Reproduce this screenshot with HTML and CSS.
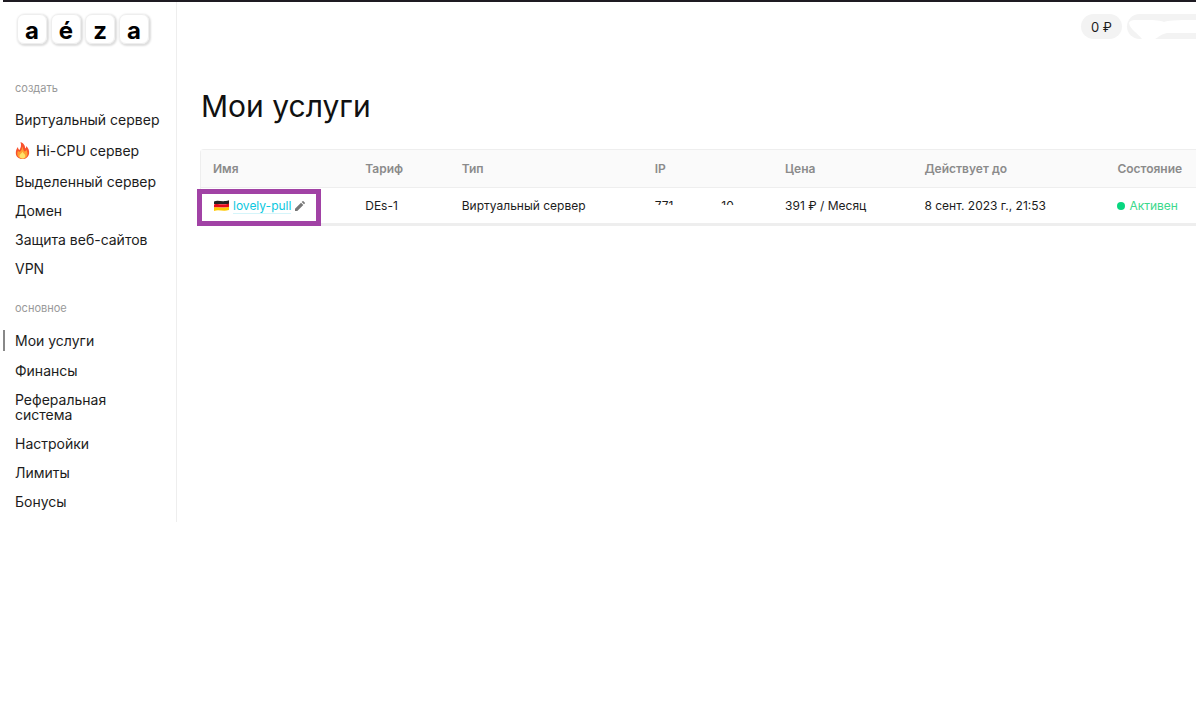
FILE: index.html
```html
<!DOCTYPE html>
<html lang="ru">
<head>
<meta charset="utf-8">
<title>Мои услуги</title>
<link rel="stylesheet" href="styles.css">
</head>
<body>
<div class="app">
  <aside class="sidebar">
    <a class="logo" href="#" aria-label="aéza"><span class="key">a</span><span class="key">é</span><span class="key">z</span><span class="key">a</span></a>
    <nav class="menu">
      <h2 class="menu-title">создать</h2>
      <ul class="menu-list">
        <li><a href="#">Виртуальный сервер</a></li>
        <li><a class="hot" href="#"><svg class="fire" viewBox="0 0 14 17" aria-hidden="true"><path fill="#f8512d" d="M5 0C8 1 10 4 9.500 6.500C10.500 6 10.800 5 10.700 4C13 6 14 9 13.600 11.500C13 15 10.500 17 7 17C3 17 .3 14.500 .3 11C.3 8.500 1 6.500 2.500 5C2.500 6.500 3 7.500 4 8C5.500 5.500 6 3 5 0Z"/><path fill="#ffa033" d="M6.500 4.500C8 6.500 7.500 8.500 9 9.500C10 9.500 10.500 8.500 10.700 7.500C12 10 12.500 12 11.500 14C10.500 16 9 16.600 7 16.600C4 16.600 1.800 14.500 1.800 12C1.800 10.800 2 9.500 2.500 8.700C3 9.800 4 10 4.700 9.500C6 8.500 6.700 6.500 6.500 4.500Z"/><path fill="#ffe26a" d="M7 9.500C7.500 11.500 10 12 9.800 14.200C9.600 15.800 8.400 16.500 7 16.500C5.200 16.500 4 15.500 4 13.800C4 12 6.500 11.500 7 9.500Z"/></svg>Hi-CPU сервер</a></li>
        <li><a href="#">Выделенный сервер</a></li>
        <li><a href="#">Домен</a></li>
        <li><a href="#">Защита веб-сайтов</a></li>
        <li><a href="#">VPN</a></li>
      </ul>
      <h2 class="menu-title">основное</h2>
      <ul class="menu-list">
        <li class="current"><a href="#" aria-current="page">Мои услуги</a></li>
        <li><a href="#">Финансы</a></li>
        <li><a href="#">Реферальная система</a></li>
        <li><a href="#">Настройки</a></li>
        <li><a href="#">Лимиты</a></li>
        <li><a href="#">Бонусы</a></li>
      </ul>
    </nav>
  </aside>
  <main class="main">
    <header class="topbar">
      <a class="balance" href="#">0 ₽</a>
      <div class="account"><svg viewBox="0 0 69 25" aria-hidden="true"><path fill="#fff" d="M2 9C3 5 10 6 17 6C24 6 32 6 37 8C42 6 59 6 69 6V19H40C35 20 33 22 28 25H15C12 20 3 16 2 9Z"/></svg></div>
    </header>
    <h1 class="title">Мои услуги</h1>
    <table class="services">
      <colgroup><col class="c-name"><col class="c-plan"><col class="c-type"><col class="c-ip"><col class="c-price"><col class="c-date"><col class="c-state"></colgroup>
      <thead>
        <tr><th>Имя</th><th>Тариф</th><th>Тип</th><th>IP</th><th>Цена</th><th>Действует до</th><th>Состояние</th></tr>
      </thead>
      <tbody>
        <tr>
          <td class="name-cell"><div class="name"><svg class="flag" viewBox="0 0 15 11" aria-hidden="true"><path fill="#222" d="M0 1.500C4-.5 8 2.500 15 .3V4H0Z"/><path fill="#e5091a" d="M0 4.500C4 3 8 5.500 15 3.500V7.500H0Z"/><path fill="#ffc800" d="M0 7.700C4 6.500 8 9 15 6.800V10C9 12 5 9 0 11Z"/></svg><a class="server" href="#">lovely-pull</a><button class="edit" type="button" aria-label="Переименовать"><svg viewBox="0 0 10 10" aria-hidden="true"><path fill="#777" d="M0 10V7.700L6 1.700L8.300 4L2.300 10ZM6.700 1L7.500.2Q8 -.2 8.500.3L9.700 1.500Q10.200 2 9.800 2.500L9 3.300Z"/></svg></button></div></td>
          <td>DEs-1</td>
          <td>Виртуальный сервер</td>
          <td><div class="ip"><span>771</span><span>10</span></div></td>
          <td>391 ₽ / Месяц</td>
          <td>8 сент. 2023 г., 21:53</td>
          <td><span class="state">Активен</span></td>
        </tr>
      </tbody>
    </table>
  </main>
</div>
</body>
</html>
```
FILE: styles.css
```css
*, *::before, *::after { box-sizing: border-box; }
body { margin: 0; background: #fff; color: #1c1c1c; font-family: Inter, "Liberation Sans", sans-serif; }
a { color: inherit; text-decoration: none; }
.app { display: flex; align-items: stretch; margin: 0 4px 0 3px; border-top: 2px solid #1e1b22; }
.sidebar { flex: none; width: 174px; padding: 12px 0 13px; border-right: 1px solid #eee; }
.logo { display: flex; gap: 4px; padding-left: 14px; }
.key { width: 30px; height: 30px; border: 1px solid #eee; border-radius: 7px; box-shadow: 1px 1px 2px 1px #ddd; color: #000; font-size: 24px; font-weight: 700; line-height: 31px; text-align: center; }
.menu-title { margin: 37px 0 17px 12px; color: #999; font-size: 11px; font-weight: 400; line-height: 14px; }
.menu-list + .menu-title { margin-top: 25px; }
.menu-list { display: flex; flex-direction: column; gap: 14px; margin: 0; padding: 0; list-style: none; font-size: 14px; line-height: 15px; }
.menu-list li { padding: 0 12px; }
.menu-list a { display: block; }
.menu-list .hot { display: flex; align-items: center; gap: 6px; line-height: 19px; }
.fire { width: 15px; height: 17px; }
.menu-list .current { margin: -2px 0; padding-top: 3px; padding-bottom: 3px; box-shadow: inset 2px 0 #888; }
.main { flex: 1; min-width: 0; padding-left: 23px; }
.topbar { display: flex; justify-content: flex-end; gap: 5px; padding-top: 12px; }
.balance { width: 41px; height: 25px; border-radius: 13px; background: #f3f3f3; font-size: 13px; line-height: 26px; text-align: center; }
.account { width: 69px; height: 25px; border-radius: 13px 0 0 13px; background: #f3f3f3; }
.account svg { display: block; width: 100%; height: 100%; }
.title { margin: 48px 0 24px 1px; color: #111; font-size: 30px; font-weight: 400; line-height: 38px; }
.services { width: 100%; table-layout: fixed; border-spacing: 0; border: 1px solid #eee; border-right: 0; border-bottom: 3px solid #eee; border-radius: 4px 0 0 0; font-size: 12px; line-height: 16px; }
.c-name { width: 15.3%; }
.c-plan { width: 9.7%; }
.c-type { width: 19.4%; }
.c-ip { width: 13.1%; }
.c-price { width: 14%; }
.c-date { width: 19.4%; }
.c-state { width: 9.1%; }
.services th, .services td { padding: 0 0 0 12px; text-align: left; white-space: nowrap; }
.services th { height: 38px; background: #fafafa; border-bottom: 1px solid #eee; color: #8b8b8b; font-weight: 600; }
.services td { height: 35px; }
.name-cell { position: relative; }
.name-cell::after { content: ""; position: absolute; left: -4px; top: 1px; width: 124px; height: 37px; border: 5px solid #a142a5; pointer-events: none; }
.name { display: flex; align-items: center; gap: 4px; padding-left: 1px; }
.flag { width: 15px; height: 11px; }
.server { color: #0cc8e0; border-bottom: 1px solid #d5f5fa; line-height: 15px; }
.edit { padding: 0; border: 0; background: none; line-height: 0; }
.edit svg { width: 10px; height: 10px; }
.ip { position: relative; display: flex; justify-content: space-between; width: 79px; }
.ip::after { content: ""; position: absolute; left: 0; right: 0; top: 7px; bottom: 0; background: #fff; }
.state { display: flex; align-items: center; gap: 4px; color: #3bd98c; }
.state::before { content: ""; width: 8px; height: 8px; border-radius: 50%; background: #08d67f; }
```
